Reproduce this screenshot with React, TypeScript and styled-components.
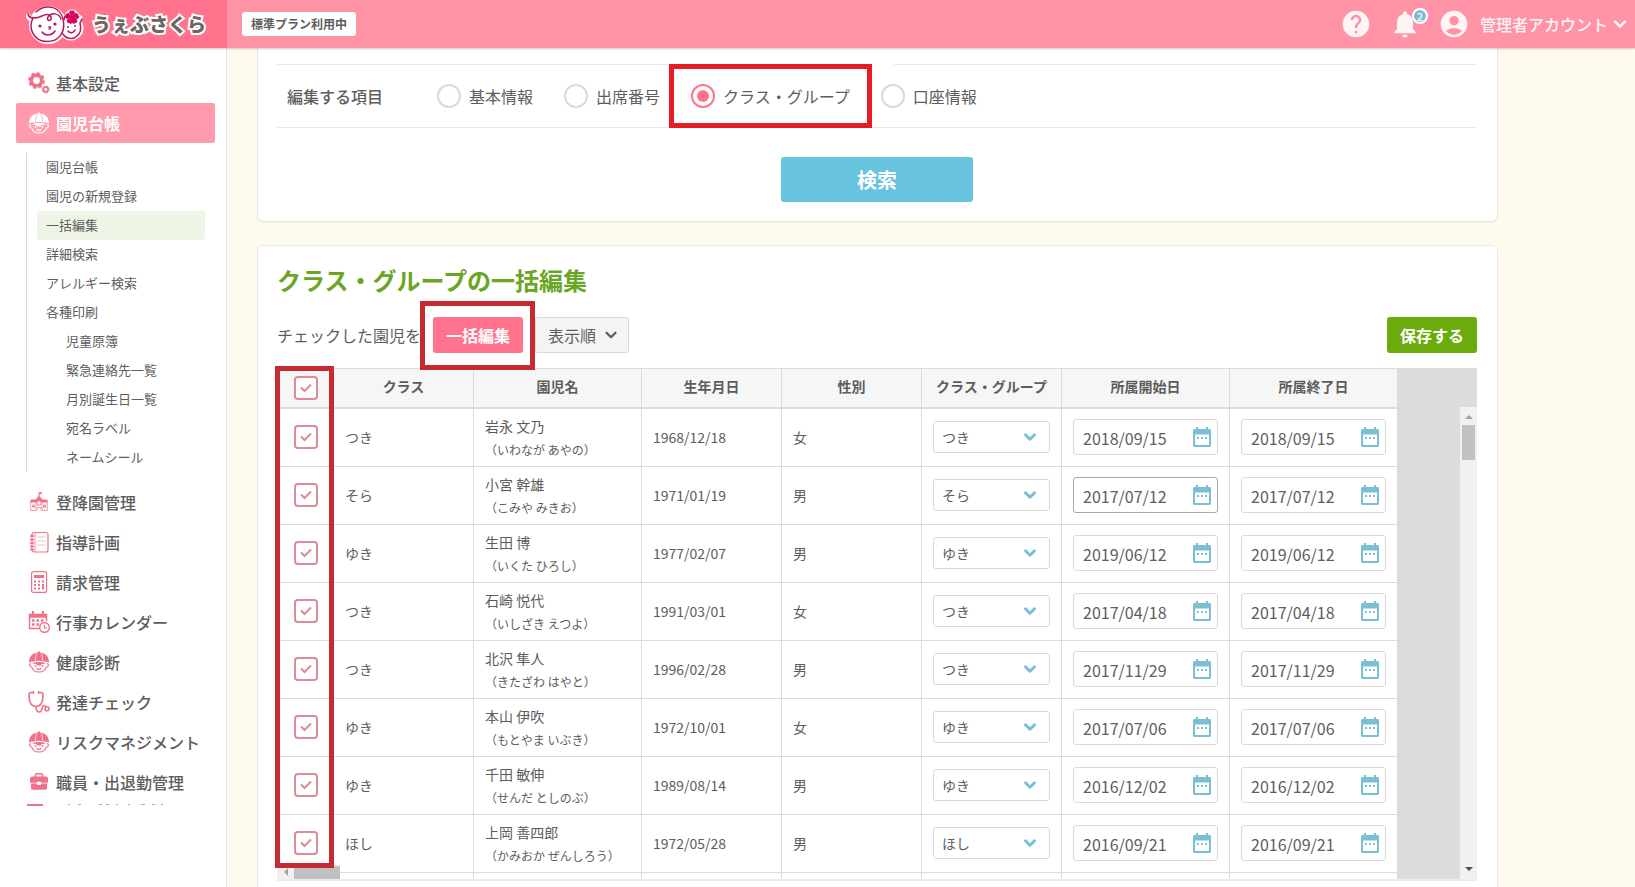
import React from 'react';
import styled, { createGlobalStyle } from 'styled-components';
import { MdHelp, MdNotifications, MdAccountCircle } from 'react-icons/md';
import { ChevronDown } from 'lucide-react';

const pink = '#ff738c';
const blue = '#7bbfd4';
const iconPink = '#ee7389';

const Global = createGlobalStyle`
  * { box-sizing: border-box; }
  html, body, #root { height: 100%; }
  body {
    margin: 0;
    overflow: hidden;
    font-family: "Noto Sans CJK JP", "Noto Sans", sans-serif;
    font-size: 16px;
    line-height: 24px;
    color: #5d5d5d;
    background: #fffaee;
  }
  button, input, select { font: inherit; color: inherit; margin: 0; }
  button { cursor: pointer; }
`;

/* ---------- shell ---------- */
const Page = styled.div`
  height: 100vh;
  display: flex;
  flex-direction: column;
`;
const Header = styled.header`
  position: relative;
  z-index: 2;
  flex: none;
  height: 48px;
  display: flex;
  align-items: center;
  background: #ff94a7;
  box-shadow: 0 1px 2px rgba(120, 60, 70, 0.3);
`;
const Brand = styled.a`
  width: 227px;
  height: 48px;
  padding-left: 26px;
  display: flex;
  align-items: center;
  gap: 8px;
  background: ${pink};
  text-decoration: none;
`;
const BrandName = styled.span`
  position: relative;
  font-size: 19px;
  font-weight: 900;
  color: #6b6563;
  -webkit-text-stroke: 4px #fff;
  paint-order: stroke fill;
`;
const Plan = styled.span`
  margin-left: 15px;
  padding: 0 9px;
  border-radius: 3px;
  background: #fff;
  font-size: 12px;
  font-weight: 700;
`;
const HeaderTools = styled.div`
  margin-left: auto;
  padding-right: 5px;
  display: flex;
  align-items: center;
  gap: 17px;
  color: #fff5f6;
`;
const ToolButton = styled.button`
  position: relative;
  display: flex;
  align-items: center;
  padding: 0;
  border: 0;
  background: none;
  color: inherit;
  font-weight: 500;
`;
const AccountName = styled.span`
  margin: 0 2px 0 10px;
`;
const Badge = styled.span`
  position: absolute;
  top: 0;
  right: -7px;
  width: 16px;
  height: 16px;
  border: 2px solid #fff;
  border-radius: 50%;
  background: ${blue};
  font-size: 11px;
  line-height: 12px;
  text-align: center;
`;
const Body = styled.div`
  flex: 1;
  min-height: 0;
  display: flex;
`;

/* ---------- sidebar ---------- */
const Sidebar = styled.aside`
  flex: none;
  width: 227px;
  padding-bottom: 81px;
  display: flex;
  background: #fff;
  border-right: 1px solid #e6e6e0;
`;
const Nav = styled.nav`
  flex: 1;
  overflow: hidden;
  padding: 15px 11px 0 16px;
`;
const NavItem = styled.a<{ $active?: boolean }>`
  height: 40px;
  padding-left: 12px;
  display: flex;
  align-items: center;
  gap: 6px;
  border-radius: 2px;
  text-decoration: none;
  font-weight: ${p => (p.$active ? 700 : 500)};
  color: ${p => (p.$active ? '#fff' : '#5d5d5d')};
  background: ${p => (p.$active ? '#ff9bad' : 'transparent')};
  & > svg { flex: none; color: ${p => (p.$active ? '#fff' : iconPink)}; }
`;
const SubNav = styled.div`
  margin: 10px 10px;
  padding-left: 10px;
  border-left: 1px solid #d8d8d8;
`;
const SubItem = styled.a<{ $active?: boolean; $nested?: boolean }>`
  display: block;
  padding: 0 0 2px ${p => (p.$nested ? 29 : 9)}px;
  border-radius: 2px;
  font-size: 13px;
  line-height: 27px;
  color: #5d5d5d;
  text-decoration: none;
  background: ${p => (p.$active ? '#eff5e6' : 'transparent')};
`;

/* ---------- main ---------- */
const Main = styled.main`
  flex: 1;
  min-width: 0;
  overflow: hidden;
  padding: 0 30px;
`;
const Card = styled.section`
  max-width: 1241px;
  padding: 0 20px 0 19px;
  border: 1px solid #ebe8dc;
  border-radius: 6px;
  background: #fff;
  box-shadow: 0 1px 1px rgba(0, 0, 0, 0.05);
`;
const SearchCard = styled(Card)`
  padding-top: 16px;
  padding-bottom: 19px;
  border-top: 0;
  border-radius: 0 0 6px 6px;
  display: flex;
  flex-direction: column;
  align-items: center;
  gap: 29px;
`;
const EditCard = styled(Card)`
  margin-top: 23px;
  padding-top: 20px;
  padding-bottom: 40px;
`;
const FieldRow = styled.div`
  align-self: stretch;
  height: 64px;
  padding: 0 10px;
  display: flex;
  border: solid #e8e8e8;
  border-width: 1px 0;
`;
const FieldName = styled.span`
  width: 150px;
  align-self: center;
  font-weight: 500;
`;
const Choices = styled.div`
  display: flex;
  gap: 31px;
`;
const Choice = styled.label<{ $marked?: boolean }>`
  position: relative;
  display: flex;
  align-items: center;
  gap: 8px;
  ${p =>
    p.$marked &&
    `
    &::before {
      content: '';
      position: absolute;
      top: -1px;
      left: 100%;
      width: 44px;
      height: 1px;
      background: #fff;
    }
    &::after {
      content: '';
      position: absolute;
      inset: -1px -22px;
      border: 5px solid #e81c24;
      pointer-events: none;
    }
  `}
`;
const Radio = styled.input`
  appearance: none;
  width: 24px;
  height: 24px;
  padding: 4px;
  border: 2px solid #d9d9d9;
  border-radius: 50%;
  background: #fff content-box;
  &:checked {
    border-color: ${pink};
    background-color: ${pink};
  }
`;
const SearchButton = styled.button`
  width: 192px;
  height: 45px;
  border: 0;
  border-radius: 3px;
  background: #67c3de;
  color: #fff;
  font-size: 20px;
  font-weight: 700;
`;
const Title = styled.h2`
  margin: 0;
  font-size: 24px;
  line-height: 28px;
  font-weight: 700;
  color: #6ba524;
`;
const Toolbar = styled.div`
  margin: 23px 0 15px;
  height: 36px;
  display: flex;
  align-items: center;
`;
const Mark = styled.span`
  position: relative;
  z-index: 1;
  display: flex;
  margin: 0 12px;
  &::after {
    content: '';
    position: absolute;
    inset: -16px -12px -17px -13px;
    border: 5px solid #c62b31;
    pointer-events: none;
  }
`;
const Button = styled.button<{ $tone: string }>`
  width: 90px;
  height: 36px;
  padding: 0;
  border: 0;
  border-radius: 3px;
  background: ${p => p.$tone};
  color: #fff;
  font-weight: 700;
`;
const OrderButton = styled.button`
  height: 36px;
  padding: 0 8px 0 12px;
  display: flex;
  align-items: center;
  gap: 6px;
  border: 1px solid #d9d9d9;
  border-radius: 3px;
  background: #f4f4f4;
`;
const Spacer = styled.div`
  flex: 1;
`;

/* ---------- table ---------- */
const TableArea = styled.div`
  position: relative;
`;
const TableFrame = styled.div`
  height: 513px;
  display: flex;
  overflow: hidden;
  background: #dcdcdc;
  border-bottom: 2px solid #ececec;
`;
const Table = styled.table`
  flex: none;
  width: 1120px;
  table-layout: fixed;
  border-collapse: separate;
  border-spacing: 0;
  background: #fff;
  font-size: 14px;
`;
const Th = styled.th<{ $w: number }>`
  width: ${p => p.$w}px;
  height: 41px;
  padding: 0;
  border-top: 1px solid #dcdcdc;
  border-bottom: 2px solid #dcdcdc;
  border-left: 1px solid #dcdcdc;
  background: #f6f6f6;
  font-weight: 700;
  line-height: 20px;
  &:not(:first-child) { padding-bottom: 4px; }
`;
const Td = styled.td`
  height: 58px;
  padding: 0 11px 2px;
  border-bottom: 1px solid #dcdcdc;
  border-left: 1px solid #dcdcdc;
`;
const ChildName = styled.div`
  margin-top: 2px;
  line-height: 24px;
`;
const Kana = styled.div`
  font-size: 12px;
  line-height: 24px;
`;
const CheckWrap = styled.label`
  display: grid;
  place-items: center;
  & > * { grid-area: 1 / 1; }
  & > svg { pointer-events: none; }
`;
const Check = styled.input`
  appearance: none;
  width: 24px;
  height: 24px;
  border: 2px solid #dd8a99;
  border-radius: 4px;
  background: #fff;
`;
const SelectWrap = styled.div`
  display: grid;
  align-items: center;
  & > * { grid-area: 1 / 1; }
  & > svg { justify-self: end; margin-right: 11px; pointer-events: none; }
`;
const Select = styled.select`
  appearance: none;
  width: 100%;
  height: 32px;
  padding: 0 8px;
  border: 1px solid #d9d9d9;
  border-radius: 3px;
  background: #fff;
`;
const DateBox = styled.div<{ $focus?: boolean }>`
  height: 36px;
  padding: 0 6px 0 9px;
  display: flex;
  align-items: center;
  justify-content: space-between;
  border: 1px solid ${p => (p.$focus ? '#a8a8a8' : '#d9d9d9')};
  border-radius: 3px;
  background: #fff;
`;
const DateInput = styled.input`
  width: 96px;
  padding: 2px 0 0;
  border: 0;
  outline: 0;
  background: none;
  font-size: 16px;
`;
const IconButton = styled.button`
  display: flex;
  padding: 0;
  border: 0;
  background: none;
`;
const ScrollTrack = styled.div`
  width: 17px;
  margin: 39px 0 0 auto;
  padding: 7px 0;
  display: flex;
  flex-direction: column;
  align-items: center;
  background: #f1f1f1;
`;
const ScrollThumb = styled.div`
  width: 13px;
  height: 35px;
  margin: 5px 0 auto;
  background: #c1c1c1;
`;
const SideScroll = styled.div`
  position: absolute;
  left: 0;
  bottom: 2px;
  width: 63px;
  height: 14px;
  display: flex;
  align-items: center;
  justify-content: space-between;
  padding-left: 6px;
  background: #f1f1f1;
  &::after {
    content: '';
    width: 46px;
    height: 13px;
    background: #c1c1c1;
  }
`;
const ColumnMark = styled.div`
  position: absolute;
  left: -2px;
  top: -2px;
  width: 59px;
  height: 502px;
  border: 5px solid #c62b31;
  pointer-events: none;
`;

/* ---------- drawings ---------- */
const Logo = () => (
  <svg width="58" height="42" viewBox="0 0 58 42" fill="none" strokeLinecap="round">
    <g fill="#fff" stroke="#fff" strokeWidth="5">
      <circle cx="22" cy="22" r="16.500" />
      <circle cx="45" cy="25" r="10" />
      <path d="M2 13c2 4 7 4 12 2M50 12l4 3" />
      <circle cx="46" cy="14" r="5" />
    </g>
    <g stroke="#b5185c" strokeWidth="1.500">
      <path d="M2 11c1 5 8 5 14 2 6-3 10-1 9 3-1 3-5 1-3-2 3-5 11-4 13 2" />
      <path d="M7 15C2 25 7 38 21 38.500c12 0 18-9 16.500-20C36 9 30 4 22 4 17 4 13 6 10 9" />
      <path d="M37 31c3 5 10 6 14 2 4-3 4-9 3-13l2-4M38 17c0-2 1-4 3-5" />
      <path d="M16 29c3 4 10 4 13-1M23 24c2-1 2 2 0 2M42 28c2 3 6 2 7-1" />
    </g>
    <g fill="#b5185c">
      <circle cx="14" cy="23" r="1.600" />
      <circle cx="29" cy="21" r="1.600" />
      <circle cx="42" cy="24" r="1" />
      <circle cx="49" cy="23" r="1" />
    </g>
    <path
      d="M46 14L43.500 9l1.500-1.500 1 1 1-1L48.500 9zM46 14l3.500-3.500 2.200.6v1.500l1.300.8-1.200 2zM46 14l5 3.200-.5 2.100h-1.500l-.8 1.200-1.700-.9zM46 14l.5 5.600-2.500.9-.8-1.200H41.500l-.3-2zM46 14l-5.500 1.400-1.300-2 1.200-.8V11l2.200-.5z"
      fill="#d8005c"
      stroke="#d8005c"
      strokeLinejoin="round"
    />
  </svg>
);

const Svg: React.FC<{ children: React.ReactNode }> = ({ children }) => (
  <svg width="22" height="22" viewBox="0 0 22 22" fill="none" stroke="currentColor" strokeWidth="1.200">
    {children}
  </svg>
);
const Gears = () => (
  <Svg>
    <circle cx="8.500" cy="8.500" r="5.200" strokeWidth="3.600" />
    <circle cx="8.500" cy="8.500" r="7.300" strokeWidth="2" strokeDasharray="3.400 2.330" />
    <circle cx="17.700" cy="17.500" r="2.300" strokeWidth="1.800" />
    <circle cx="17.700" cy="17.500" r="3.500" strokeWidth="1" strokeDasharray="1.600 1.150" />
  </Svg>
);
const Child: React.FC<{ inner: string }> = ({ inner }) => (
  <Svg>
    <path d="M1 11.500C1 5 5 1.500 11 1.500s10 3.500 10 10c-6-2-14-2-20 0z" fill="currentColor" stroke="none" />
    <path d="M11 .5v2" strokeWidth="2" />
    <path d="M7.500 9.500C7.500 6 8 4 9 2.500M14.500 9.500C14.500 6 14 4 13 2.500" stroke={inner} strokeWidth=".7" />
    <path d="M3 12.500c-2 0-2 3.500.8 3.600C5 19.500 8 21 11 21s6-1.500 7.200-4.900c2.800-.1 2.800-3.600.8-3.600" />
    <path d="M4 12.500l3.500-1.500h7l3.500 1.500-4 .5-1.500 1.500h-3L8 13z" fill="currentColor" stroke="none" />
    <circle cx="7.500" cy="15" r=".9" fill="currentColor" stroke="none" />
    <circle cx="14.500" cy="15" r=".9" fill="currentColor" stroke="none" />
    <path d="M8.500 17.200c1.500 1.600 3.500 1.600 5 0" strokeWidth="1.400" />
  </Svg>
);
const School = () => (
  <Svg>
    <path d="M11 5V1.500h2.500v1.300H11" strokeWidth="1" />
    <path d="M7.500 8.500L11 4.500l3.500 4h4.500l1.500 3H1.500l1.500-3z" fill="currentColor" stroke="none" />
    <path d="M2.700 11.500v8H8v-8M19.300 11.500v8H14v-8M9 19.500v-3h4v3" strokeWidth="1" opacity=".7" />
    <circle cx="11" cy="12" r="2.300" fill="#fff" strokeWidth="1" />
    <path d="M4.500 14.200h2v2h-2zM15.500 14.200h2v2h-2z" strokeWidth="1" />
  </Svg>
);
const Notebook = () => (
  <Svg>
    <rect x="4" y="1.500" width="16" height="19.500" rx="2" />
    <path d="M7 1.500V21" strokeWidth=".8" />
    <path d="M2 5h4M2 8.500h4M2 12h4M2 15.500h4M2 18.500h4" strokeWidth="1.400" />
    <path d="M9.500 6h8M9.500 10h8M9.500 14h8" strokeWidth=".8" opacity=".6" />
  </Svg>
);
const Calculator = () => (
  <Svg>
    <rect x="3.600" y=".6" width="15" height="20.800" rx="2" />
    <path d="M6 5.500h10" strokeWidth="3" />
    <path d="M6 10.500h2M10 10.500h2M14 10.500h2M6 14h2M10 14h2M6 17.500h2M10 17.500h2" strokeWidth="2" />
    <path d="M15 13v5.500" strokeWidth="2" />
  </Svg>
);
const EventCalendar = () => (
  <Svg>
    <path d="M11 17.500H1.500V3.500h17v7" strokeWidth="1.500" />
    <path d="M1.500 5h17" strokeWidth="3.500" />
    <path d="M5 0v4M15 0v4" strokeWidth="2" />
    <path d="M4 9.500h2.500M8.500 9.500H11M13 9.500h2.500M4 13.500h2.500M8.500 13.500H11" strokeWidth="2.500" />
    <circle cx="16.500" cy="16.500" r="4.800" fill="#fff" strokeWidth="1.400" />
    <path d="M16.500 14v3h2.500" />
  </Svg>
);
const Stethoscope = () => (
  <Svg>
    <path
      d="M5.500 1.500H3.200C1.800 1.500 1 2.500 1 4c0 6 1.500 11.500 7 11.500S15 10 15 4c0-1.500-.8-2.500-2.200-2.500h-2.300"
      strokeWidth="1.600"
    />
    <path d="M5.500 0v3M10.500 0v3" strokeWidth="1.400" />
    <path d="M8 15.500c0 3.500 1 5.500 3.500 5.500 3.500 0 1.500-6.500 4.500-6.500 1.500 0 1.700 1 1.700 2" strokeWidth="1.600" />
    <circle cx="19" cy="17.800" r="2" strokeWidth="1.600" />
  </Svg>
);
const Briefcase = () => (
  <Svg>
    <path d="M7.500 6V4c0-.8.5-1.300 1.300-1.300h4.400c.8 0 1.300.5 1.300 1.300v2" strokeWidth="1.600" />
    <path d="M4 5.500h14c1.200 0 2 .8 2 2v4.200h-7v-1H9v1H2V7.500c0-1.200.8-2 2-2zM3 12.400h6v1.600h4v-1.600h6V17c0 1-.7 1.700-1.700 1.700H4.700C3.700 18.700 3 18 3 17z" fill="currentColor" stroke="none" />
  </Svg>
);
/* The last entry of the menu, of which only the upper edge is in view. */
const ClippedEntry = styled.svg`
  display: block;
  margin-top: 2px;
`;
const CalendarIcon = () => (
  <svg width="18" height="20" viewBox="0 0 18 20" fill={blue}>
    <path d="M3 0h2v2h8V0h2v2h1.500C17.300 2 18 2.700 18 3.500v15c0 .8-.7 1.500-1.500 1.500h-15C.7 20 0 19.300 0 18.500v-15C0 2.700.7 2 1.500 2H3zM2 7.500V18h14V7.500z" fillRule="evenodd" />
    <path d="M4 10h2v2H4zM8 10h2v2H8zM12 10h2v2h-2z" />
  </svg>
);
const CheckBox: React.FC<{ label: string }> = ({ label }) => (
  <CheckWrap>
    <Check type="checkbox" defaultChecked aria-label={label} />
    <svg width="12" height="10" viewBox="0 0 12 10" fill="none" stroke="#dd8a99" strokeWidth="2">
      <path d="M1 4.500l3.500 3.500L11 1.500" />
    </svg>
  </CheckWrap>
);

/* ---------- data ---------- */
const subItems: { label: string; nested?: boolean }[] = [
  { label: '園児台帳' },
  { label: '園児の新規登録' },
  { label: '一括編集' },
  { label: '詳細検索' },
  { label: 'アレルギー検索' },
  { label: '各種印刷' },
  { label: '児童原簿', nested: true },
  { label: '緊急連絡先一覧', nested: true },
  { label: '月別誕生日一覧', nested: true },
  { label: '宛名ラベル', nested: true },
  { label: 'ネームシール', nested: true },
];
const menu: [string, React.ReactNode][] = [
  ['登降園管理', <School />],
  ['指導計画', <Notebook />],
  ['請求管理', <Calculator />],
  ['行事カレンダー', <EventCalendar />],
  ['健康診断', <Child inner="#fff" />],
  ['発達チェック', <Stethoscope />],
  ['リスクマネジメント', <Child inner="#fff" />],
  ['職員・出退勤管理', <Briefcase />],
];
const columns: [string, number][] = [
  ['クラス', 140],
  ['園児名', 168],
  ['生年月日', 140],
  ['性別', 140],
  ['クラス・グループ', 140],
  ['所属開始日', 168],
  ['所属終了日', 168],
];
const classes = ['つき', 'そら', 'ゆき', 'ほし'];
const children = [
  ['つき', '岩永 文乃', 'いわなが あやの', '1968/12/18', '女', '2018/09/15'],
  ['そら', '小宮 幹雄', 'こみや みきお', '1971/01/19', '男', '2017/07/12'],
  ['ゆき', '生田 博', 'いくた ひろし', '1977/02/07', '男', '2019/06/12'],
  ['つき', '石崎 悦代', 'いしざき えつよ', '1991/03/01', '女', '2017/04/18'],
  ['つき', '北沢 隼人', 'きたざわ はやと', '1996/02/28', '男', '2017/11/29'],
  ['ゆき', '本山 伊吹', 'もとやま いぶき', '1972/10/01', '女', '2017/07/06'],
  ['ゆき', '千田 敏伸', 'せんだ としのぶ', '1989/08/14', '男', '2016/12/02'],
  ['ほし', '上岡 善四郎', 'かみおか ぜんしろう', '1972/05/28', '男', '2016/09/21'],
];

const DateField: React.FC<{ value: string; label: string; focus?: boolean }> = ({ value, label, focus }) => (
  <DateBox $focus={focus}>
    <DateInput type="text" defaultValue={value} aria-label={label} />
    <IconButton type="button" aria-label={label}>
      <CalendarIcon />
    </IconButton>
  </DateBox>
);

export default function App() {
  return (
    <Page>
      <Global />
      <Header>
        <Brand href="#">
          <Logo />
          <BrandName>うぇぶさくら</BrandName>
        </Brand>
        <Plan>標準プラン利用中</Plan>
        <HeaderTools>
          <ToolButton aria-label="ヘルプ"><MdHelp size={32} /></ToolButton>
          <ToolButton aria-label="お知らせ">
            <MdNotifications size={32} />
            <Badge>2</Badge>
          </ToolButton>
          <ToolButton>
            <MdAccountCircle size={32} />
            <AccountName>管理者アカウント</AccountName>
            <ChevronDown size={20} strokeWidth={3} />
          </ToolButton>
        </HeaderTools>
      </Header>
      <Body>
        <Sidebar>
          <Nav>
            <NavItem href="#"><Gears />基本設定</NavItem>
            <NavItem href="#" $active><Child inner="#ff9bad" />園児台帳</NavItem>
            <SubNav>
              {subItems.map(s => (
                <SubItem key={s.label} href="#" $nested={s.nested} $active={s.label === '一括編集'}>
                  {s.label}
                </SubItem>
              ))}
            </SubNav>
            {menu.map(([label, icon]) => (
              <NavItem key={label} href="#">{icon}{label}</NavItem>
            ))}
            <ClippedEntry width="180" height="20">
              <path d="M11 0h16v16H11z" fill={iconPink} />
              <path d="M52 .5h2M62 .5h3M83 .5h3M90 .5h3M100 .5h2M112 .5h2M125 .5h4M136 .5h3M145 .5h2" stroke="#aaa" />
            </ClippedEntry>
          </Nav>
        </Sidebar>
        <Main>
          <SearchCard>
            <FieldRow role="radiogroup" aria-label="編集する項目">
              <FieldName>編集する項目</FieldName>
              <Choices>
                {['基本情報', '出席番号', 'クラス・グループ', '口座情報'].map(c => (
                  <Choice key={c} $marked={c === 'クラス・グループ'}>
                    <Radio type="radio" name="item" defaultChecked={c === 'クラス・グループ'} />
                    {c}
                  </Choice>
                ))}
              </Choices>
            </FieldRow>
            <SearchButton>検索</SearchButton>
          </SearchCard>
          <EditCard>
            <Title>クラス・グループの一括編集</Title>
            <Toolbar>
              チェックした園児を
              <Mark><Button $tone={pink}>一括編集</Button></Mark>
              <OrderButton>表示順<ChevronDown size={18} strokeWidth={3} /></OrderButton>
              <Spacer />
              <Button $tone="#6cab0c">保存する</Button>
            </Toolbar>
            <TableArea>
              <TableFrame>
                <Table>
                  <thead>
                    <tr>
                      <Th $w={56}><CheckBox label="すべて選択" /></Th>
                      {columns.map(([name, w]) => <Th key={name} $w={w}>{name}</Th>)}
                    </tr>
                  </thead>
                  <tbody>
                    {children.map(([cls, name, kana, birth, sex, date], i) => (
                      <tr key={name}>
                        <Td><CheckBox label={name} /></Td>
                        <Td>{cls}</Td>
                        <Td>
                          <ChildName>{name}</ChildName>
                          <Kana>（{kana}）</Kana>
                        </Td>
                        <Td>{birth}</Td>
                        <Td>{sex}</Td>
                        <Td>
                          <SelectWrap>
                            <Select defaultValue={cls} aria-label="クラス・グループ">
                              {classes.map(c => <option key={c}>{c}</option>)}
                            </Select>
                            <ChevronDown size={18} strokeWidth={4} color={blue} />
                          </SelectWrap>
                        </Td>
                        <Td><DateField value={date} label="所属開始日" focus={i === 1} /></Td>
                        <Td><DateField value={date} label="所属終了日" /></Td>
                      </tr>
                    ))}
                    <tr>
                      <Td /><Td /><Td /><Td /><Td /><Td /><Td /><Td />
                    </tr>
                  </tbody>
                </Table>
                <ScrollTrack>
                  <svg width="8" height="6"><path d="M0 5l4-4 4 4z" fill="#a3a3a3" /></svg>
                  <ScrollThumb />
                  <svg width="8" height="6"><path d="M0 1l4 4 4-4z" fill="#505050" /></svg>
                </ScrollTrack>
              </TableFrame>
              <SideScroll>
                <svg width="5" height="8"><path d="M5 0L1 4l4 4z" fill="#a3a3a3" /></svg>
              </SideScroll>
              <ColumnMark />
            </TableArea>
          </EditCard>
        </Main>
      </Body>
    </Page>
  );
}
